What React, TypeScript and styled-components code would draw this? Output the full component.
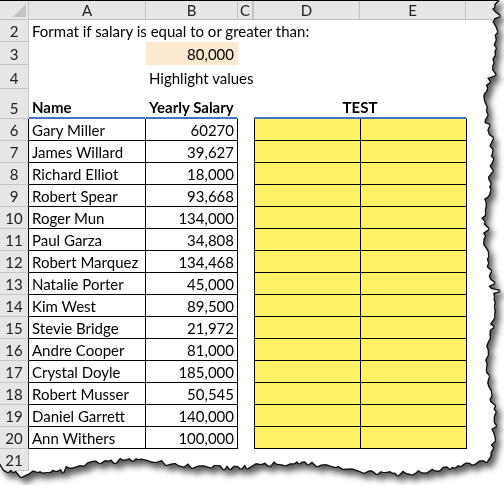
import React from 'react';
import styled, { createGlobalStyle } from 'styled-components';

const GlobalStyle = createGlobalStyle`
  html, body {
    margin: 0;
    padding: 0;
    background: #fff;
  }
`;

// torn paper edge, right and bottom side
function rng(seed: number) {
  let s = seed;
  return () => {
    s = (s * 16807) % 2147483647;
    return (s - 1) / 2147483646;
  };
}

function tornEdge(): string {
  const r = rng(91);
  const pts: string[] = ['0px 0px', '494px 0px'];
  let y = 0;
  while (y < 462) {
    const spike = r() < 0.12 ? (r() - 0.3) * 9 : 0;
    const x = 489 + 4 * Math.sin(y / 21) + 2.5 * Math.sin(y / 53 + 1) + (r() - 0.5) * 5 + spike;
    pts.push(`${x.toFixed(1)}px ${y}px`);
    y += 2 + Math.round(r() * 3);
  }
  let x = 487;
  while (x > 0) {
    const spike = r() < 0.12 ? (r() - 0.3) * 9 : 0;
    const yy = 466 + 4 * Math.sin(x / 29 + 0.5) + 3 * Math.sin(x / 67 + 2) + (r() - 0.5) * 5 + spike;
    pts.push(`${x}px ${yy.toFixed(1)}px`);
    x -= 2 + Math.round(r() * 3);
  }
  pts.push('0px 463px');
  return pts.join(', ');
}

const TORN = tornEdge();

const Paper = styled.div`
  width: 504px;
  height: 485px;
  filter: drop-shadow(1px 0 0 #111) drop-shadow(-1px 0 0 #111) drop-shadow(0 1px 0 #111)
    drop-shadow(0 -1px 0 #111) drop-shadow(4px 5px 3px rgba(0, 0, 0, 0.65));
`;

const Sheet = styled.div`
  width: 504px;
  height: 485px;
  background: #fff;
  clip-path: polygon(${TORN});
  display: flex;
  flex-direction: column;
  font-family: Lato, 'Liberation Sans', sans-serif;
  font-size: 15px;
  color: #000;
`;

const HeaderRow = styled.div`
  display: flex;
  height: 20px;
  box-sizing: border-box;
  background: #e6e6e6;
  border-top: 1px solid #000;
  border-bottom: 1px solid #bdbdbd;
  flex-shrink: 0;
`;

const Corner = styled.div`
  width: 29px;
  box-sizing: border-box;
  border-right: 1px solid #c4c4c4;
  display: flex;
  justify-content: flex-end;
  align-items: flex-end;
  padding: 0 2px 2px 0;
`;

const Triangle = styled.div`
  width: 0;
  height: 0;
  border-left: 13px solid transparent;
  border-bottom: 13px solid #c3c3c3;
`;

const ColHead = styled.div<{ $w?: number; $last?: boolean }>`
  ${(p) => (p.$w ? `width: ${p.$w}px; flex-shrink: 0;` : 'flex: 1;')}
  box-sizing: border-box;
  border-right: ${(p) => (p.$last ? 'none' : '1px solid #c4c4c4')};
  ${(p) => (p.$w === 107 ? 'border-left: 1px solid #c4c4c4;' : '')}
  display: flex;
  align-items: center;
  justify-content: center;
  color: #222;
  line-height: 18px;
`;

const Row = styled.div<{ $h: number }>`
  display: flex;
  height: ${(p) => p.$h}px;
  flex-shrink: 0;
`;

const RowNum = styled.div<{ $edge?: string }>`
  width: 29px;
  flex-shrink: 0;
  box-sizing: border-box;
  background: #e6e6e6;
  border-right: 1px solid ${(p) => p.$edge || '#c4c4c4'};
  border-bottom: 1px solid #c4c4c4;
  display: flex;
  align-items: flex-end;
  justify-content: center;
  padding-bottom: 1px;
  line-height: 18px;
  color: #222;
`;

const Cell = styled.div<{
  $w: number;
  $line?: string;
  $bottom?: string;
  $left?: boolean;
  $fill?: string;
  $align?: 'left' | 'right' | 'center';
  $bold?: boolean;
}>`
  width: ${(p) => p.$w}px;
  flex-shrink: 0;
  box-sizing: border-box;
  border-right: 1px solid ${(p) => p.$line || 'transparent'};
  border-bottom: ${(p) => p.$bottom || `1px solid ${p.$line || 'transparent'}`};
  border-left: ${(p) => (p.$left ? `1px solid ${p.$line || 'transparent'}` : 'none')};
  background: ${(p) => p.$fill || 'transparent'};
  display: flex;
  align-items: flex-end;
  justify-content: ${(p) =>
    p.$align === 'right' ? 'flex-end' : p.$align === 'center' ? 'center' : 'flex-start'};
  padding: 0 3px 1px 3px;
  line-height: 18px;
  white-space: nowrap;
  font-weight: ${(p) => (p.$bold ? 700 : 400)};
`;

const Spacer = styled.div`
  flex: 1;
`;

const WIDTHS = { A: 117, B: 92, C: 16, D: 107, E: 106 };
const BLUE = '2px solid #4472c4';

const people: [string, string][] = [
  ['Gary Miller', '60270'],
  ['James Willard', '39,627'],
  ['Richard Elliot', '18,000'],
  ['Robert Spear', '93,668'],
  ['Roger Mun', '134,000'],
  ['Paul Garza', '34,808'],
  ['Robert Marquez', '134,468'],
  ['Natalie Porter', '45,000'],
  ['Kim West', '89,500'],
  ['Stevie Bridge', '21,972'],
  ['Andre Cooper', '81,000'],
  ['Crystal Doyle', '185,000'],
  ['Robert Musser', '50,545'],
  ['Daniel Garrett', '140,000'],
  ['Ann Withers', '100,000'],
];

function App() {
  return (
    <>
      <GlobalStyle />
      <Paper>
        <Sheet>
          <HeaderRow>
            <Corner>
              <Triangle />
            </Corner>
            <ColHead $w={WIDTHS.A}>A</ColHead>
            <ColHead $w={WIDTHS.B}>B</ColHead>
            <ColHead $w={WIDTHS.C - 1}>C</ColHead>
            <ColHead $w={WIDTHS.D}>D</ColHead>
            <ColHead $w={WIDTHS.E}>E</ColHead>
            <ColHead $last />
          </HeaderRow>

          <Row $h={22}>
            <RowNum>2</RowNum>
            <Cell $w={WIDTHS.A}>Format if salary is equal to or greater than:</Cell>
          </Row>
          <Row $h={23}>
            <RowNum>3</RowNum>
            <Cell $w={WIDTHS.A} />
            <Cell $w={WIDTHS.B} $fill="#fce9cf" $align="right">
              80,000
            </Cell>
          </Row>
          <Row $h={24}>
            <RowNum>4</RowNum>
            <Cell $w={WIDTHS.A} />
            <Cell $w={WIDTHS.B}>Highlight values</Cell>
          </Row>
          <Row $h={30}>
            <RowNum>5</RowNum>
            <Cell $w={WIDTHS.A} $bold $bottom={BLUE}>
              Name
            </Cell>
            <Cell $w={WIDTHS.B} $bold $bottom={BLUE}>
              Yearly Salary
            </Cell>
            <Cell $w={WIDTHS.C} />
            <Cell $w={WIDTHS.D + WIDTHS.E} $bold $align="center" $bottom={BLUE}>
              TEST
            </Cell>
          </Row>

          {people.map(([name, salary], i) => (
            <Row $h={22} key={name}>
              <RowNum $edge="#000">{i + 6}</RowNum>
              <Cell $w={WIDTHS.A} $line="#000">
                {name}
              </Cell>
              <Cell $w={WIDTHS.B} $line="#000" $align="right">
                {salary}
              </Cell>
              <Cell $w={WIDTHS.C} />
              <Cell $w={WIDTHS.D} $line="#000" $left $fill="#fff266" />
              <Cell $w={WIDTHS.E} $line="#000" $fill="#fff266" />
            </Row>
          ))}

          <Row $h={22}>
            <RowNum>21</RowNum>
          </Row>
          <Spacer />
        </Sheet>
      </Paper>
    </>
  );
}

export default App;
